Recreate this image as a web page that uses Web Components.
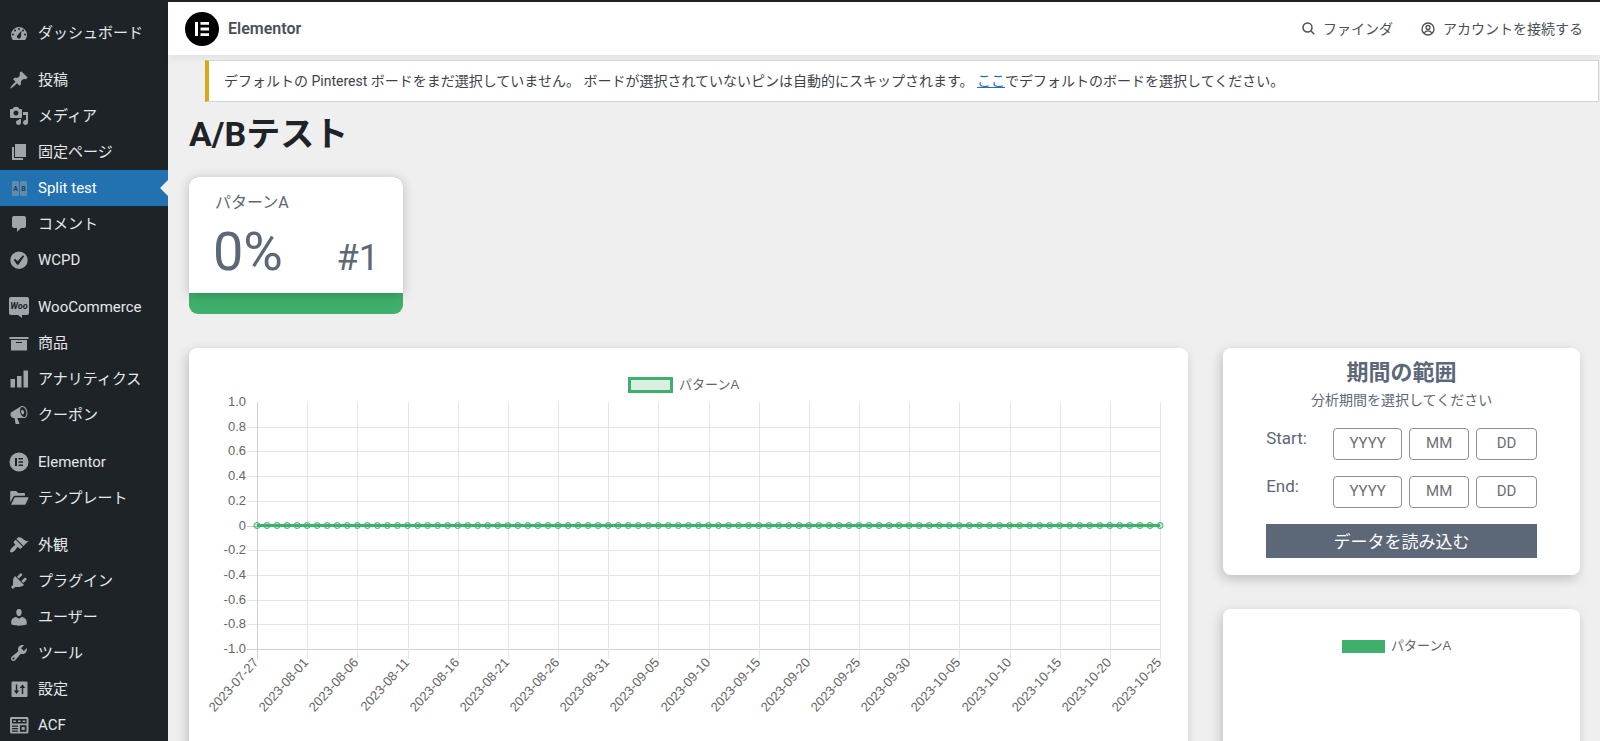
<!DOCTYPE html>
<html lang="ja">
<head>
<meta charset="utf-8">
<title>A/Bテスト</title>
<style>
  body { margin: 0; font-family: Roboto, "Noto Sans CJK JP", sans-serif; background: #efefef; color: #3c434a; }
</style>
</head>
<body>
<ab-app>
  <ab-menu slot="menu">
    <ab-item icon="dashboard">ダッシュボード</ab-item>
    <ab-item icon="post" group>投稿</ab-item>
    <ab-item icon="media">メディア</ab-item>
    <ab-item icon="page">固定ページ</ab-item>
    <ab-item icon="split" current>Split test</ab-item>
    <ab-item icon="comment">コメント</ab-item>
    <ab-item icon="check">WCPD</ab-item>
    <ab-item icon="woo" group>WooCommerce</ab-item>
    <ab-item icon="archive">商品</ab-item>
    <ab-item icon="bars">アナリティクス</ab-item>
    <ab-item icon="megaphone">クーポン</ab-item>
    <ab-item icon="elementor" group>Elementor</ab-item>
    <ab-item icon="folder">テンプレート</ab-item>
    <ab-item icon="brush" group>外観</ab-item>
    <ab-item icon="plug">プラグイン</ab-item>
    <ab-item icon="user">ユーザー</ab-item>
    <ab-item icon="wrench">ツール</ab-item>
    <ab-item icon="sliders">設定</ab-item>
    <ab-item icon="fields">ACF</ab-item>
  </ab-menu>
  <ab-topbar slot="top">Elementor</ab-topbar>
  <ab-notice>デフォルトの Pinterest ボードをまだ選択していません。 ボードが選択されていないピンは自動的にスキップされます。 <a slot="link" href="#board">ここ</a><span slot="rest">でデフォルトのボードを選択してください。</span></ab-notice>
  <ab-title>A/Bテスト</ab-title>
  <ab-stat rate="0%" rank="#1">パターンA</ab-stat>
  <ab-board>
    <ab-card slot="chart"><ab-chart label="パターンA"></ab-chart></ab-card>
    <ab-card slot="side"><ab-range></ab-range></ab-card>
    <ab-card slot="side" class="grow"><ab-legend>パターンA</ab-legend></ab-card>
  </ab-board>
</ab-app>

<script>
const define = (name, html, setup) => {
  const tpl = document.createElement('template');
  tpl.innerHTML = html;
  customElements.define(name, class extends HTMLElement {
    constructor() {
      super();
      this.attachShadow({ mode: 'open' }).append(tpl.content.cloneNode(true));
    }
    connectedCallback() { if (setup) setup(this, this.shadowRoot); }
  });
};

const p = d => `<path fill-rule="evenodd" d="${d}"/>`;
const ICONS = {
  dashboard: p('M3.76 17h12.48A8 8 0 1 0 3.76 17zM10 5a1 1 0 1 1 0 2 1 1 0 0 1 0-2zM6 6.5a1 1 0 1 1 0 2 1 1 0 0 1 0-2zM14 6.5a1 1 0 1 1 0 2 1 1 0 0 1 0-2zM12.5 7.6l-.6 6.2a2 2 0 1 1-2.9-2zM4 10.500a1 1 0 1 1 0 2 1 1 0 0 1 0-2zM16 10.500a1 1 0 1 1 0 2 1 1 0 0 1 0-2z'),
  post: p('M10.44 3.02l1.82-1.82 6.36 6.35-1.83 1.82c-1.05-.68-2.48-.57-3.41.36l-.75.75c-.92.93-1.04 2.35-.35 3.41l-1.83 1.82-2.41-2.41-2.8 2.79c-.42.42-3.38 2.71-3.8 2.29s1.86-3.39 2.28-3.81l2.79-2.79L4.1 9.36l1.83-1.82c1.05.69 2.48.57 3.4-.36l.75-.75c.93-.92 1.05-2.35.36-3.41z'),
  media: p('M13 11V4c0-.55-.45-1-1-1h-1.67L9 1H5L3.67 3H2c-.55 0-1 .45-1 1v7c0 .55.45 1 1 1h10c.55 0 1-.45 1-1zM7 4.500c1.38 0 2.500 1.12 2.500 2.500S8.380 9.500 7 9.500 4.500 8.380 4.500 7 5.620 4.500 7 4.500zM14 6h5v10.500c0 1.38-1.12 2.500-2.500 2.500S14 17.880 14 16.500s1.120-2.500 2.500-2.500c.17 0 .34.02.5.05V9h-3V6zm-4 8.050V13h2v3.500c0 1.380-1.120 2.500-2.500 2.500S7 17.880 7 16.500 8.120 14 9.500 14c.17 0 .34.02.5.05z'),
  page: p('M6 15V2h11v13H6zm-1 1h9v2H3V5h2v11z'),
  split: '<g opacity=".5"><rect x="3" y="3" width="7" height="15" rx="1.500"/><rect x="11" y="3" width="7" height="15" rx="1.500"/></g><text x="6.500" y="13" text-anchor="middle" font-size="7" font-weight="700" fill="#1d4060">A</text><text x="14.500" y="13" text-anchor="middle" font-size="7" font-weight="700" fill="#1d4060">B</text>',
  comment: p('M5 2h10c1.1 0 2 .9 2 2v8c0 1.100-.9 2-2 2h-3l-4 4v-4H5c-1.100 0-2-.9-2-2V4c0-1.100.9-2 2-2z'),
  check: p('M10 1.500a8.700 8.700 0 1 0 0 17.400 8.700 8.700 0 0 0 0-17.400zm-.615 13.160h-1.340l-3.240-4.540 1.341-1.250 2.569 2.400 5.141-5.931 1.340.94-5.811 8.381z'),
  woo: '<rect x="0" y="0" width="20" height="18" rx="2"/><path d="M9 18h4v3z"/><text x="10" y="12" text-anchor="middle" font-size="9" font-weight="700" font-style="italic" fill="#1d2327">Woo</text>',
  archive: p('M19.500 4v2h-19V4h19zM2 7h16v10.500H2V7zm11 3V9H7v1h6z'),
  bars: p('M19 18.500V1.500h-4.500v17H19zm-6.500 0V7H8v11.500h4.500zm-6.500 0V10H1.500v8.500H6z'),
  megaphone: p('M18.150 5.940c.46 1.620.38 3.220-.02 4.480-.42 1.280-1.260 2.180-2.300 2.480-.16.06-.26.06-.4.06-.06.02-.12.02-.18.02-.06.02-.14.02-.22.02h-6.800l2.220 5.500c.02.14-.06.26-.14.34-.08.1-.24.16-.34.16H6.950c-.1 0-.26-.06-.34-.16-.08-.08-.16-.2-.14-.34l-1-5.500H4.250l-.02-.02c-.5.06-1.080-.18-1.540-.62s-.88-1.080-1.060-1.880c-.24-.8-.2-1.560-.02-2.200.18-.62.58-1.080 1.060-1.300l.02-.02 9-5.400c.1-.06.18-.1.24-.16.06-.04.14-.08.24-.12.16-.08.28-.12.5-.18 1.040-.3 2.240.1 3.220.98s1.840 2.240 2.260 3.860zm-2.580 5.980h-.02c.4-.1.74-.34 1.040-.7.58-.7.86-1.760.86-3.040 0-.64-.1-1.300-.28-1.980-.34-1.360-1.020-2.500-1.780-3.240s-1.680-1.100-2.460-.88c-.82.22-1.400.96-1.700 2-.32 1.040-.28 2.360.06 3.720.38 1.360 1 2.500 1.800 3.240.78.74 1.620 1.100 2.480.88zm-2.540-7.080c.22-.04.42-.02.62.04.38.16.76.48 1.020 1s.42 1.200.42 1.780c0 .3-.04.56-.12.8-.18.48-.44.84-.86.94-.34.1-.8-.06-1.140-.4s-.64-.86-.78-1.500c-.18-.62-.12-1.240.02-1.720s.48-.84.82-.94z'),
  elementor: p('M10 .5a9.500 9.500 0 1 0 0 19 9.500 9.500 0 0 0 0-19zM6 6h2v8H6zM9.500 6H14v1.600H9.500zM9.500 9.200H14v1.600H9.500zM9.500 12.400H14V14H9.500z'),
  folder: p('M1.200 14.500V4.200c0-.7.5-1.200 1.200-1.200h4.800l2 2h5.600c.7 0 1.200.5 1.200 1.200v1.600H6.200c-.9 0-1.600.4-2 1.200zM2 16.800l3.300-6.900c.2-.4.6-.7 1.100-.7h12.400c.5 0 .8.500.6 1l-2.700 5.700c-.3.600-.8.9-1.400.9z'),
  brush: p('M14.480 11.060L7.410 3.990l1.500-1.500c.5-.56 2.300-.47 3.510.32 1.210.8 1.430 1.280 2.910 2.100 1.180.64 2.450 1.260 4.450.85zm-.71.71L6.700 4.700 4.930 6.470c-.39.39-.39 1.020 0 1.410l1.060 1.060c.39.39.39 1.030 0 1.420-.6.6-1.430 1.110-2.210 1.690-.35.26-.7.53-1.010.84C1.430 14.230.4 16.080 1.400 17.070c.99 1 2.840-.03 4.180-1.360.31-.31.58-.66.85-1.020.57-.78 1.080-1.610 1.690-2.210.39-.39 1.020-.39 1.410 0l1.060 1.060c.39.39 1.020.39 1.410 0z'),
  plug: p('M13.110 4.360L9.870 7.600 8 5.730l3.240-3.240c.35-.34 1.050-.2 1.560.32.52.51.66 1.210.31 1.550zm-8 1.770l.91-1.120 9.010 9.010-1.190.84c-.71.71-2.630 1.160-3.820 1.160H6.140L4.900 17.260c-.59.59-1.540.59-2.120 0-.59-.58-.59-1.530 0-2.120l1.240-1.240v-3.880c0-1.130.4-3.190 1.090-3.890zm7.260 3.970l3.240-3.240c.34-.35 1.040-.21 1.550.31.52.51.66 1.210.31 1.550l-3.240 3.250z'),
  user: p('M10 9.250c-2.270 0-2.730-3.440-2.730-3.440C7 4.020 7.820 2 9.970 2c2.160 0 2.980 2.020 2.710 3.810 0 0-.41 3.440-2.680 3.440zm0 2.570L12.720 10c2.390 0 5 2.330 5 4.530v2.990s-3.650 1.130-7.720 1.130c-3.950 0-7.740-1.130-7.740-1.130v-2.990c0-2.250 2.440-4.480 4.970-4.480z'),
  wrench: p('M16.680 9.770c-1.340 1.340-3.300 1.670-4.950.99l-5.410 6.520c-.99.99-2.590.99-3.580 0s-.99-2.590 0-3.570l6.520-5.420c-.68-1.650-.35-3.610.99-4.950 1.280-1.280 3.120-1.620 4.720-1.060l-2.890 2.890 2.820 2.820 2.860-2.870c.53 1.580.18 3.390-1.080 4.650zM3.810 16.210c.4.39 1.040.39 1.430 0 .4-.4.4-1.040 0-1.430-.39-.4-1.030-.4-1.430 0-.39.39-.39 1.030 0 1.430z'),
  sliders: p('M18.500 17V3.500a1 1 0 0 0-1-1h-14a1 1 0 0 0-1 1V17a1 1 0 0 0 1 1h14a1 1 0 0 0 1-1zM8.200 11.500h2.100L7.500 15l-2.800-3.500h2.100V5.500h1.400zM14.200 9v6h-1.400V9h-2.100l2.800-3.500L16.300 9z'),
  fields: p('M2.500 2h15.500c.8 0 1.500.7 1.500 1.500v13.500c0 .8-.7 1.500-1.500 1.500H2.500c-.8 0-1.500-.7-1.500-1.500V3.500C1 2.700 1.700 2 2.500 2zM3 4v4.500h14.500V4zM3 10.500v1.200h6v-1.200zM3 13v1.200h6V13zM3 15.500v1.200h6v-1.200zM11 10.200v6.600h6.500v-6.600zM12.700 12h3v3h-3zM4.200 5.500h2.600v1.600H4.200zM9 5.500h2.600v1.600H9zM13.700 5.500h2.600v1.600h-2.600z')
};

define('ab-app', `
<style>
  :host { display: grid; grid-template-columns: 168px 1fr; height: 100vh; overflow: hidden; box-sizing: border-box; border-top: 2px solid #1d2327; }
  .content { min-width: 0; }
</style>
<slot name="menu"></slot>
<div class="content"><slot name="top"></slot><main><slot></slot></main></div>`);

define('ab-menu', `
<style>
  :host { display: block; background: #1d2327; }
  nav { display: flex; flex-direction: column; padding-top: 13px; }
</style>
<nav><slot></slot></nav>`);

define('ab-item', `
<style>
  :host { display: block; flex: none; color: #e6e7e8; }
  :host([group]) { margin-top: 11px; }
  :host([current]) { color: #fff; }
  a { position: relative; display: flex; align-items: center; gap: 9px; height: 36px; padding-left: 9px; color: inherit; text-decoration: none; font-size: 15px; line-height: 22px; white-space: nowrap; }
  svg { flex: none; width: 20px; height: 20px; overflow: visible; fill: #a0a5aa; }
  :host([current]) a { background: #2271b1; }
  :host([current]) a::after { content: ""; position: absolute; right: 0; top: 10px; border: 8px solid transparent; border-left: 0; border-right-color: #efefef; }
</style>
<a href="#"><svg viewBox="0 0 20 20" aria-hidden="true"></svg><span><slot></slot></span></a>`,
(el, root) => { root.querySelector('svg').innerHTML = ICONS[el.getAttribute('icon')]; });

define('ab-topbar', `
<style>
  :host { display: block; }
  header { display: flex; align-items: center; justify-content: space-between; height: 53px; padding: 0 17px; background: #fff; box-shadow: 0 4px 8px rgba(0,0,0,.05); color: #495157; }
  .brand, a { display: flex; align-items: center; line-height: 20px; }
  .brand { gap: 9px; font-size: 16px; font-weight: 600; }
  nav { display: flex; gap: 28px; }
  a { gap: 8px; color: inherit; text-decoration: none; font-size: 14px; }
</style>
<header>
  <div class="brand">
    <svg width="34" height="34" viewBox="0 0 34 34" aria-hidden="true"><circle cx="17" cy="17" r="17"/><path fill="#fff" d="M10 10h3v14h-3zM15.500 10H24v2.800h-8.500zM15.500 15.600H24v2.800h-8.500zM15.500 21.200H24V24h-8.500z"/></svg>
    <span><slot></slot></span>
  </div>
  <nav>
    <a href="#finder"><svg width="13" height="13" viewBox="0 0 13 13" fill="none" stroke="currentColor" stroke-width="1.500" aria-hidden="true"><circle cx="5.500" cy="5.500" r="4.500"/><path d="M9 9l3.300 3.300"/></svg>ファインダ</a>
    <a href="#account"><svg width="14" height="14" viewBox="0 0 14 14" fill="none" stroke="currentColor" stroke-width="1.300" aria-hidden="true"><circle cx="7" cy="7" r="6"/><circle cx="7" cy="5.500" r="2"/><path d="M3.200 11.300C4 9.200 5.500 8.800 7 8.800s3 .4 3.800 2.500"/></svg>アカウントを接続する</a>
  </nav>
</header>`);

define('ab-notice', `
<style>
  :host { display: block; margin: 5px 1px 0 37px; padding: 9px 15px; background: #fff; border: 1px solid #d2d3d5; border-left: 4px solid #dba617; font-size: 14px; line-height: 22px; color: #3c434a; }
  ::slotted(a) { color: #2271b1; }
</style>
<slot></slot><slot name="link"></slot><slot name="rest"></slot>`);

define('ab-title', `
<style>
  :host { display: block; margin: 12px 21px 23px; color: #1d2327; }
  h1 { margin: 0; font-size: 34px; line-height: 40px; font-weight: 700; }
</style>
<h1><slot></slot></h1>`);

define('ab-stat', `
<style>
  :host { display: block; width: 214px; margin-left: 21px; background: #3fb06c; border-radius: 9px; padding-bottom: 21px; color: #5c6878; }
  .face { box-sizing: border-box; height: 116px; background: #fff; border-radius: 9px 9px 0 0; padding: 12px 24px 0; box-shadow: 0 2px 12px rgba(0,0,0,.22); }
  .name { padding: 0 2px 2px; font-size: 16px; line-height: 28px; }
  .row { display: flex; justify-content: space-between; align-items: baseline; line-height: 65px; }
  .rate { font-size: 54px; }
  .rank { font-size: 36px; }
</style>
<div class="face"><div class="name"><slot></slot></div><div class="row"><span class="rate"></span><span class="rank"></span></div></div>`,
(el, root) => {
  root.querySelector('.rate').textContent = el.getAttribute('rate');
  root.querySelector('.rank').textContent = el.getAttribute('rank');
});

define('ab-board', `
<style>
  :host { display: grid; grid-template-columns: 14fr 5fr; gap: 35px; margin: 34px 20px 0 21px; }
  .side { display: flex; flex-direction: column; gap: 34px; }
</style>
<slot name="chart"></slot><div class="side"><slot name="side"></slot></div>`);

define('ab-card', `
<style>
  :host { display: block; background: #fff; border-radius: 8px; box-shadow: -2px 4px 12px rgba(0,0,0,.2); min-width: 0; }
  :host(.grow) { flex: 1; }
</style>
<slot></slot>`);

define('ab-legend', `
<style>
  :host { display: flex; justify-content: center; align-items: center; gap: 6px; padding: 27px 10px 0 0; color: #666; font: 13px/20px "Liberation Sans", "Noto Sans CJK JP", sans-serif; }
  i { width: 43px; height: 13px; background: #3fb06c; }
  :host([outlined]) i { box-sizing: border-box; width: 45px; height: 16px; background: #d9efe2; border: 3px solid #3fb06c; }
</style>
<i></i><span><slot></slot></span>`);

define('ab-range', `
<style>
  :host { display: block; padding: 10px 43px 17px; color: #5c6878; text-align: center; }
  h2 { margin: 0; font-size: 22px; line-height: 30px; font-weight: 700; }
  p { margin: 0 0 16px; font-size: 14px; line-height: 24px; }
  .row { display: grid; grid-template-columns: 60px 69px 60px 1fr; gap: 7px; margin-bottom: 16px; text-align: left; }
  label { font-size: 17px; line-height: 20px; }
  input { box-sizing: border-box; width: 100%; height: 32px; padding: 0 0 3px; border: 1px solid #8c8f94; border-radius: 4px; background: #fff; text-align: center; font: 15px Roboto, sans-serif; color: #5c6878; }
  input::placeholder { color: #6c7075; opacity: 1; }
  button { width: 100%; height: 34px; padding: 0 0 2px; border: 0; background: #5c6878; color: #fff; font: 17px Roboto, "Noto Sans CJK JP", sans-serif; }
</style>
<h2>期間の範囲</h2>
<p>分析期間を選択してください</p>
<div class="row"><label for="start">Start:</label><input id="start" placeholder="YYYY"><input aria-label="Start month" placeholder="MM"><input aria-label="Start day" placeholder="DD"></div>
<div class="row"><label for="end">End:</label><input id="end" placeholder="YYYY"><input aria-label="End month" placeholder="MM"><input aria-label="End day" placeholder="DD"></div>
<button type="button">データを読み込む</button>`);

define('ab-chart', `
<style>
  :host { display: block; }
  svg { display: block; width: 100%; height: 360px; font: 13px "Liberation Sans", sans-serif; fill: #666; }
</style>
<ab-legend outlined></ab-legend><svg role="img"></svg>`,
(el, root) => {
  const label = el.getAttribute('label');
  const svg = root.querySelector('svg');
  root.querySelector('ab-legend').textContent = label;
  svg.setAttribute('aria-label', label);
  const first = Date.UTC(2023, 6, 27), days = 90;
  const left = 68, top = 7, height = 247, green = '#3fb06c';
  const draw = () => {
    const width = el.clientWidth - left - 28;
    if (width <= 0) return;
    let out = '';
    for (let i = 0; i <= 10; i++) {
      const y = Math.round(top + height * i / 10), v = (10 - 2 * i) / 10;
      const shade = i === 5 ? '#c4c4c4' : i === 10 ? '#d0d0d0' : '#e5e5e5';
      if (i) out += `<path stroke="${shade}" d="M${left - 10} ${y + .5}H${left + width}"/>`;
      out += `<text x="${left - 11}" y="${y + 4}" text-anchor="end">${v ? v.toFixed(1) : 0}</text>`;
    }
    for (let d = 0; d <= days; d += 5) {
      const x = Math.round(left + width * d / days);
      const date = new Date(first + d * 864e5).toISOString().slice(0, 10);
      out += `<path stroke="${d ? '#e5e5e5' : '#cfcfcf'}" d="M${x + .5} ${top}V${top + height + 10}"/>`;
      out += `<text transform="translate(${x + 2} ${top + height + 14}) rotate(-48)" text-anchor="end">${date}</text>`;
    }
    const mid = top + height / 2;
    out += `<path stroke="${green}" stroke-width="3" d="M${left} ${mid}H${left + width}"/>`;
    for (let d = 0; d <= days; d++)
      out += `<circle cx="${left + width * d / days}" cy="${mid}" r="3" fill="${green}" fill-opacity=".25" stroke="${green}"/>`;
    svg.innerHTML = out;
  };
  draw();
  new ResizeObserver(draw).observe(el);
});
</script>
</body>
</html>
